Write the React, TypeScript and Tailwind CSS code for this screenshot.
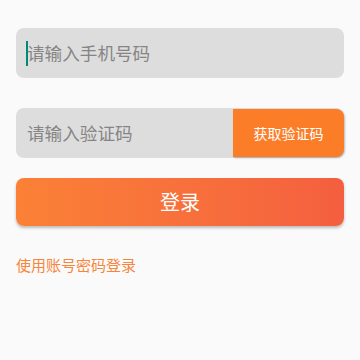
export default function App() {
  return (
    <div
      className="w-[360px] h-[360px] bg-[#fafafa] px-4 pt-7"
      style={{ fontFamily: '"Noto Sans CJK SC", "Noto Sans", sans-serif' }}
    >
      {/* Phone input */}
      <div className="h-[50px] rounded-lg bg-[#dddddd] flex items-center pl-[10px]">
        <span className="w-[2px] h-[25px] bg-[#00897b] mr-[-1px]" />
        <span className="text-[17.6px] text-[#858585] leading-none">请输入手机号码</span>
      </div>

      {/* Code input */}
      <div className="mt-[30px] h-[50px] rounded-lg bg-[#dddddd] flex items-stretch">
        <div className="flex-1 flex items-center pl-[11px]">
          <span className="text-[17.6px] text-[#858585] leading-none">请输入验证码</span>
        </div>
        <div className="w-[111px] my-px bg-[#fc7d27] rounded-r-lg shadow-[1px_1px_2px_rgba(0,0,0,0.25)] flex items-center justify-center">
          <span className="text-[14px] text-white leading-none">获取验证码</span>
        </div>
      </div>

      {/* Login button */}
      <div className="mt-5 h-[48px] rounded-lg bg-gradient-to-r from-[#fb8136] to-[#f45f3f] shadow-[0_2px_3px_rgba(0,0,0,0.25)] flex items-center justify-center">
        <span className="text-[20px] text-white leading-none">登录</span>
      </div>

      {/* Password login link */}
      <div className="mt-[31px] text-[15px] text-[#f7853a] leading-none">使用账号密码登录</div>
    </div>
  )
}
